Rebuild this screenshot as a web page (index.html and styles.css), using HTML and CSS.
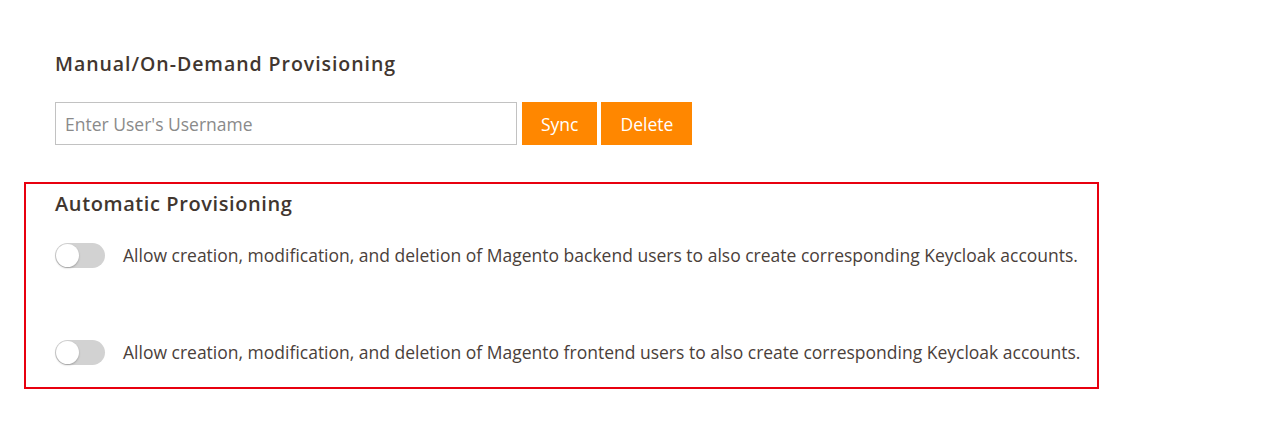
FILE: index.html
```html
<!doctype html>
<html lang="en-us">
  <head>
    <meta charset="utf-8" />
    <title>Provisioning</title>
    <link rel="stylesheet" href="styles.css">
  </head>
  <body>
    <div class="page">
      <section class="manual">
        <h3>Manual/On-Demand Provisioning</h3>
        <div class="controls">
          <input type="text" placeholder="Enter User's Username" />
          <button>Sync</button>
          <button>Delete</button>
        </div>
      </section>

      <section class="auto">
        <h2>Automatic Provisioning</h2>
        <label class="option">
          <span class="toggle"></span>
          <span>Allow creation, modification, and deletion of Magento backend users to also create corresponding Keycloak accounts.</span>
        </label>
        <label class="option">
          <span class="toggle"></span>
          <span>Allow creation, modification, and deletion of Magento frontend users to also create corresponding Keycloak accounts.</span>
        </label>
      </section>
    </div>
  </body>
</html>
```

FILE: styles.css
```css
* {
  box-sizing: border-box;
}

body {
  margin: 0;
  background: #fff;
  font-family: 'Open Sans', sans-serif;
  color: #41362f;
}

.page {
  padding-top: 51px;
}

.manual {
  padding-left: 55px;
}

h3 {
  margin: 0 0 25px 0;
  font-size: 19.5px;
  font-weight: 600;
  letter-spacing: 0.95px;
  color: #41362f;
  line-height: 26px;
}

.controls {
  display: flex;
  gap: 4px;
}

input {
  width: 462px;
  height: 43px;
  border: 1px solid #c2c2c2;
  padding: 0 9px;
  font-family: inherit;
  font-size: 17.5px;
  color: #333;
  margin-right: 1px;
}

input::placeholder {
  color: #8a8a8a;
}

input:focus {
  outline: none;
}

button {
  height: 43px;
  padding: 0 19px;
  background: #ff8700;
  color: #fff;
  border: none;
  font-family: inherit;
  font-size: 17.5px;
  cursor: pointer;
}

.auto {
  margin: 37px 0 0 24px;
  width: 1075px;
  height: 207px;
  border: 2px solid #e8000f;
  padding: 6px 0 0 29px;
}

h2 {
  margin: 0 0 25px 0;
  font-size: 20px;
  font-weight: 600;
  letter-spacing: 0.6px;
  color: #41362f;
  line-height: 28px;
}

.option {
  display: flex;
  align-items: center;
  gap: 18px;
  font-size: 17.5px;
  color: #4a403a;
  line-height: 25px;
  margin-bottom: 72px;
}

.toggle {
  width: 50px;
  height: 25px;
  border-radius: 13px;
  background: #d2d2d2;
  position: relative;
  flex: none;
}

.toggle::after {
  content: '';
  position: absolute;
  left: 1px;
  top: 1px;
  width: 23px;
  height: 23px;
  border-radius: 50%;
  background: #fff;
  box-shadow: 0 1px 2px rgba(0, 0, 0, 0.25);
}
```
